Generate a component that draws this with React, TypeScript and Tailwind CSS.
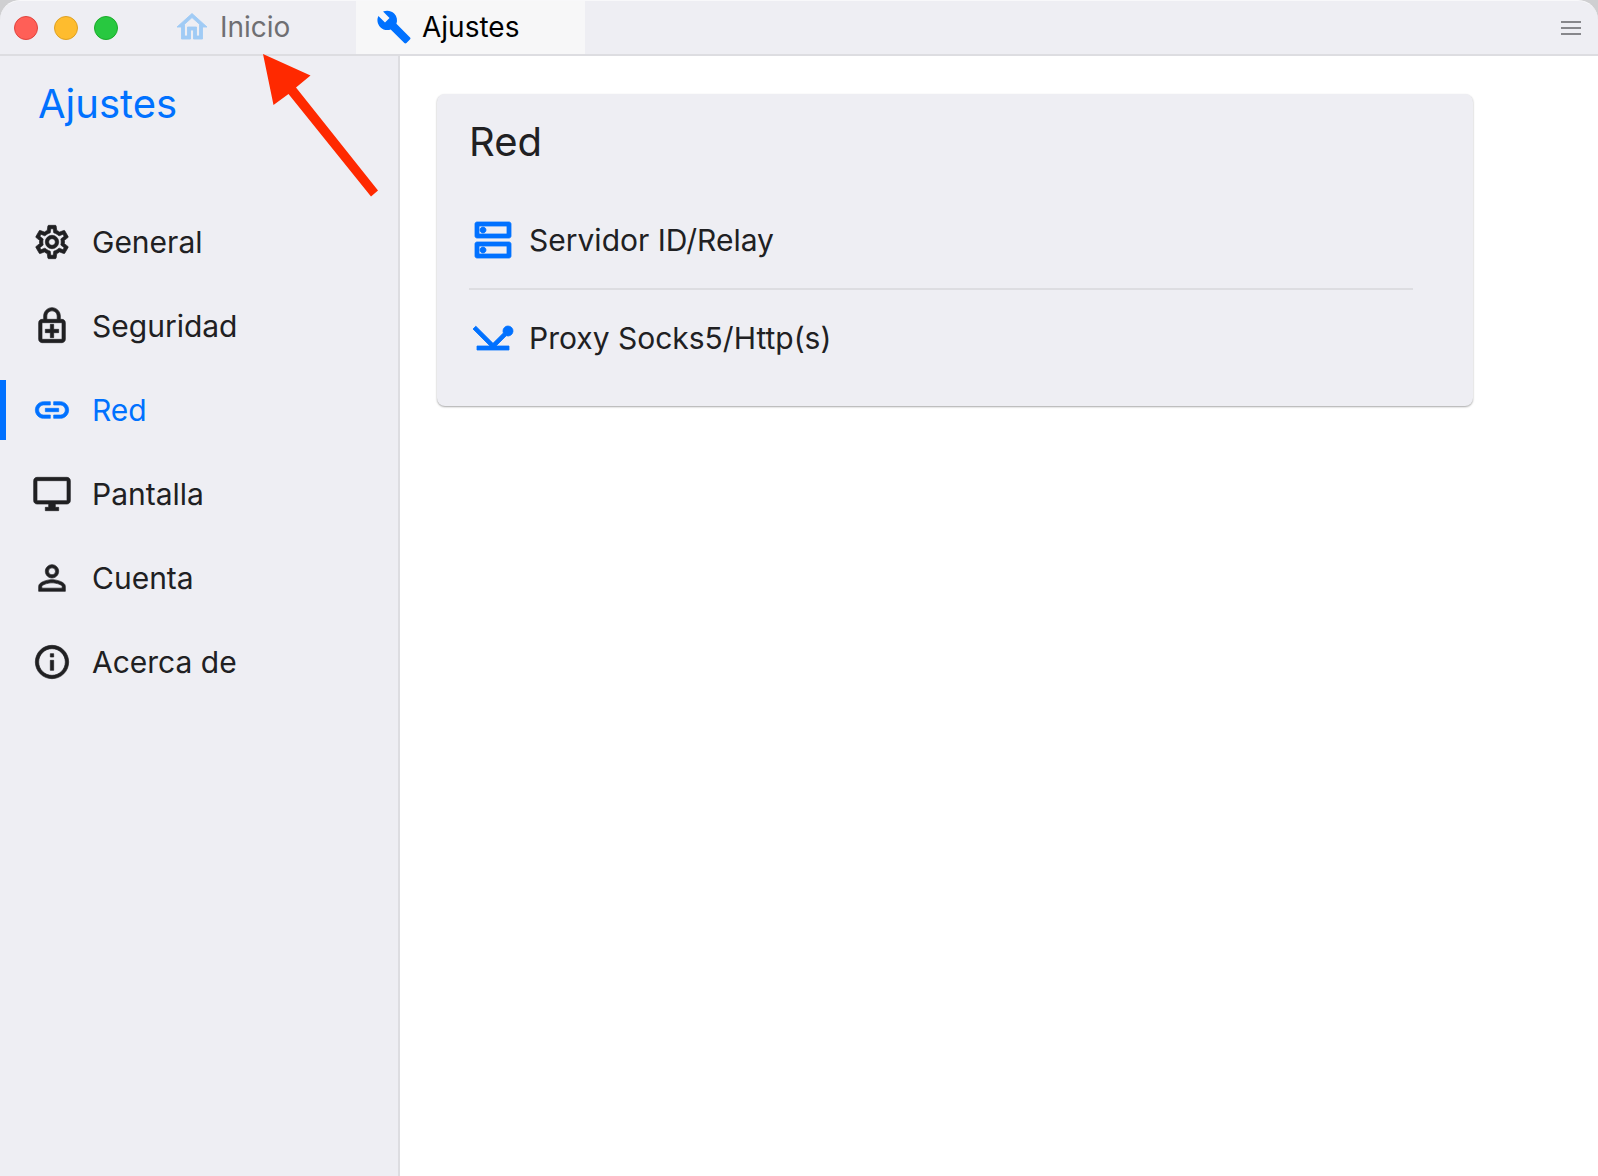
import { useState } from "react"
import type { IconType } from "react-icons"
import {
  MdBuild,
  MdInfoOutline,
  MdOutlineDesktopWindows,
  MdOutlineDns,
  MdOutlineEnhancedEncryption,
  MdOutlineHome,
  MdOutlineLink,
  MdOutlineNetworkPing,
  MdOutlineSettings,
  MdPersonOutline,
} from "react-icons/md"

type Item = { label: string; icon: IconType }

const sections: Item[] = [
  { label: "General", icon: MdOutlineSettings },
  { label: "Seguridad", icon: MdOutlineEnhancedEncryption },
  { label: "Red", icon: MdOutlineLink },
  { label: "Pantalla", icon: MdOutlineDesktopWindows },
  { label: "Cuenta", icon: MdPersonOutline },
  { label: "Acerca de", icon: MdInfoOutline },
]

const networkOptions: Item[] = [
  { label: "Servidor ID/Relay", icon: MdOutlineDns },
  { label: "Proxy Socks5/Http(s)", icon: MdOutlineNetworkPing },
]

function WindowButtons() {
  return (
    <div className="flex items-center gap-4 pl-3.5">
      <button aria-label="Cerrar" className="size-6 rounded-full border border-[#e0443e] bg-[#ff5f57]" />
      <button aria-label="Minimizar" className="size-6 rounded-full border border-[#dea123] bg-[#febc2e]" />
      <button aria-label="Maximizar" className="size-6 rounded-full border border-[#1aab29] bg-[#28c840]" />
    </div>
  )
}

function TitleBar() {
  return (
    <header className="flex h-14 items-stretch rounded-t-[20px] border-t border-b-2 border-t-[#f8f8fa] border-b-[#dddde1] bg-[#eeeef3]">
      <WindowButtons />
      <nav className="ml-14 flex">
        <button className="flex w-[182px] items-center gap-2.5 pb-0.5 text-[28px] text-[#6f6f72]">
          <MdOutlineHome strokeWidth={0.6} className="size-9 text-[#a0cbf5] [&_path[fill=none]]:stroke-none" />
          Inicio
        </button>
        <button className="flex w-[229px] items-center gap-2.5 bg-[#f7f7f8] pb-0.5 pl-5 text-[28px] text-black">
          <MdBuild className="size-9 text-[#0071ff]" />
          Ajustes
        </button>
      </nav>
      <button aria-label="Menú" className="mr-4 ml-auto">
        <svg viewBox="0 0 22 16" className="h-4 w-[22px]" stroke="#666669" strokeWidth="1.5">
          <path d="M1 2h20M1 8h20M1 14h20" />
        </svg>
      </button>
    </header>
  )
}

function Sidebar({ selected, onSelect }: { selected: string; onSelect: (label: string) => void }) {
  return (
    <aside className="w-[400px] shrink-0 border-r-2 border-[#dddde1] bg-[#eeeef3]">
      <h1 className="pt-6 pl-[38px] text-[40px] leading-12 text-[#0071ff]">Ajustes</h1>
      <ul className="mt-21 flex flex-col gap-6">
        {sections.map(({ label, icon: Icon }) => {
          const active = label === selected
          return (
            <li key={label}>
              <button
                onClick={() => onSelect(label)}
                className={`flex h-[60px] w-full items-center text-[30px] ${active ? "text-[#0071ff]" : "text-[#202022]"}`}
              >
                <span className={`h-full w-1.5 ${active ? "bg-[#0071ff]" : ""}`} />
                <Icon strokeWidth={0.4} className="mr-5 ml-[26px] size-10 [&_path[fill=none]]:stroke-none" />
                {label}
              </button>
            </li>
          )
        })}
      </ul>
    </aside>
  )
}

function NetworkCard() {
  return (
    <section className="w-full max-w-[1036px] rounded-lg bg-[#eeeef3] px-8 pt-6 pb-5 shadow-[0_1px_2px_rgba(0,0,0,0.35)]">
      <h2 className="text-[40px] leading-12 text-[#202022]">Red</h2>
      <ul className="mt-[26px] mr-7 divide-y-2 divide-[#dddde1]">
        {networkOptions.map(({ label, icon: Icon }) => (
          <li key={label}>
            <button className="flex h-24 w-full items-center gap-3 text-[30px] text-[#202022]">
              <Icon strokeWidth={0.4} className="size-12 text-[#0071ff] [&_path[fill=none]]:stroke-none" />
              {label}
            </button>
          </li>
        ))}
      </ul>
    </section>
  )
}

function PointerArrow() {
  return (
    <svg viewBox="0 0 116 145" className="pointer-events-none absolute top-[54px] left-[263px] h-[145px] w-[116px]">
      <path d="M0 0 47.5 21.5 33 33.5 115 136.5 108 142.5 25.5 40 10.5 51Z" fill="#ff2900" />
    </svg>
  )
}

export default function App() {
  const [selected, setSelected] = useState("Red")

  return (
    <div className="relative flex min-h-screen flex-col bg-[#cfcfd1] font-['Inter',sans-serif]">
      <TitleBar />
      <div className="flex flex-1">
        <Sidebar selected={selected} onSelect={setSelected} />
        <main className="flex-1 bg-white px-[37px] py-[38px]">
          <NetworkCard />
        </main>
      </div>
      <PointerArrow />
    </div>
  )
}
